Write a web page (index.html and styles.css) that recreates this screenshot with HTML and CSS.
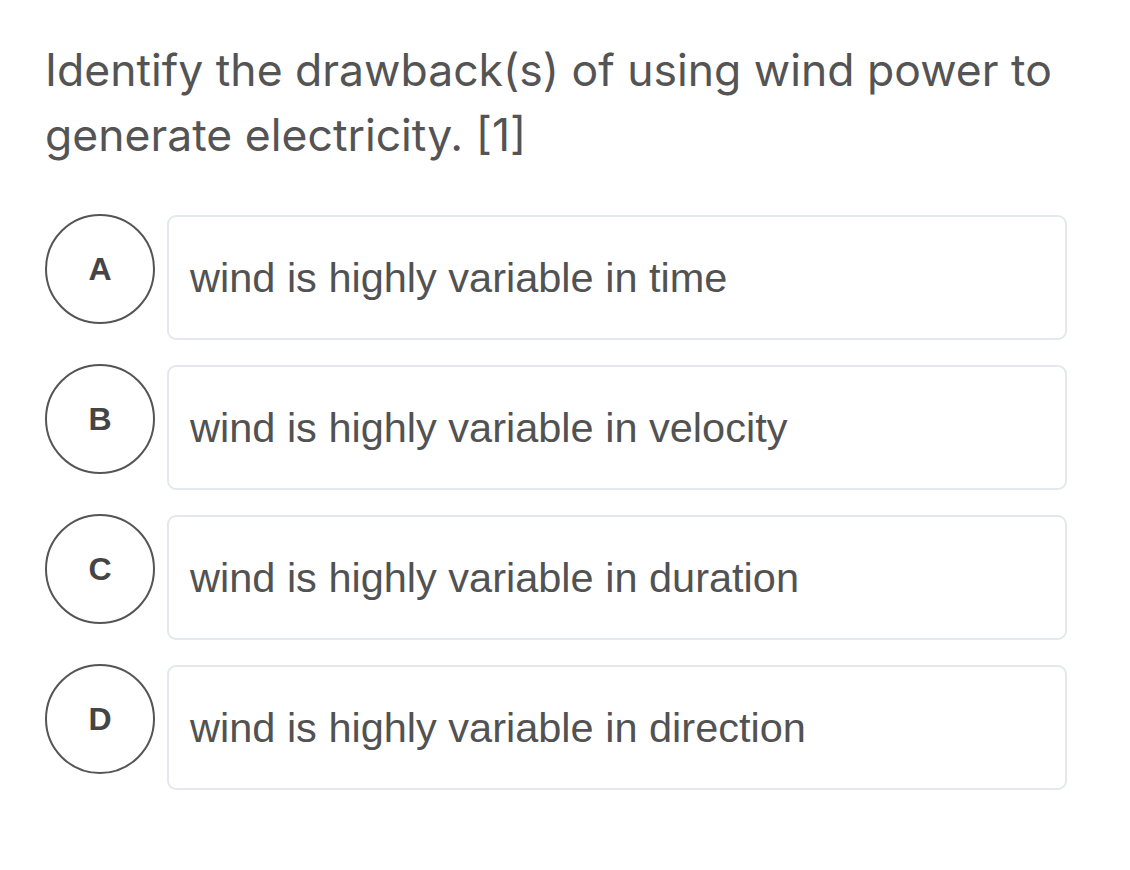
FILE: index.html
```html
<!DOCTYPE html>
<html>
<head>
<meta charset="utf-8">
<link rel="stylesheet" href="styles.css">
</head>
<body>
<div class="page">
  <h1 class="question">Identify the drawback(s) of using wind power to generate electricity. [1]</h1>
  <div class="options">
    <div class="option">
      <div class="letter">A</div>
      <div class="answer">wind is highly variable in time</div>
    </div>
    <div class="option">
      <div class="letter">B</div>
      <div class="answer">wind is highly variable in velocity</div>
    </div>
    <div class="option">
      <div class="letter">C</div>
      <div class="answer">wind is highly variable in duration</div>
    </div>
    <div class="option">
      <div class="letter">D</div>
      <div class="answer">wind is highly variable in direction</div>
    </div>
  </div>
</div>
</body>
</html>
```
FILE: styles.css
```css
html, body {
  margin: 0;
  padding: 0;
  background: #ffffff;
}
.page {
  padding: 38px 0 0 45px;
  width: 1022px;
  font-family: Inter, "Noto Sans", sans-serif;
  color: #555555;
}
.question {
  margin: 0;
  font-size: 44.5px;
  font-weight: 400;
  line-height: 65px;
  color: #545454;
  width: 1040px;
}
.options {
  margin-top: 47px;
  display: flex;
  flex-direction: column;
  gap: 25px;
}
.option {
  display: flex;
  align-items: flex-start;
  gap: 12px;
}
.letter {
  width: 106px;
  height: 106px;
  border: 2px solid #555555;
  border-radius: 50%;
  display: flex;
  align-items: center;
  justify-content: center;
  font-family: "Liberation Sans", Arial, sans-serif;
  font-weight: 700;
  font-size: 32px;
  color: #454545;
  flex: none;
  margin-top: -1px;
}
.answer {
  flex: 1;
  height: 121px;
  border: 2px solid #e4e8ee;
  border-radius: 9px;
  display: flex;
  align-items: center;
  padding-left: 21px;
  font-family: "Liberation Sans", Arial, sans-serif;
  font-size: 41.5px;
  color: #525252;
  box-sizing: content-box;
}
```
